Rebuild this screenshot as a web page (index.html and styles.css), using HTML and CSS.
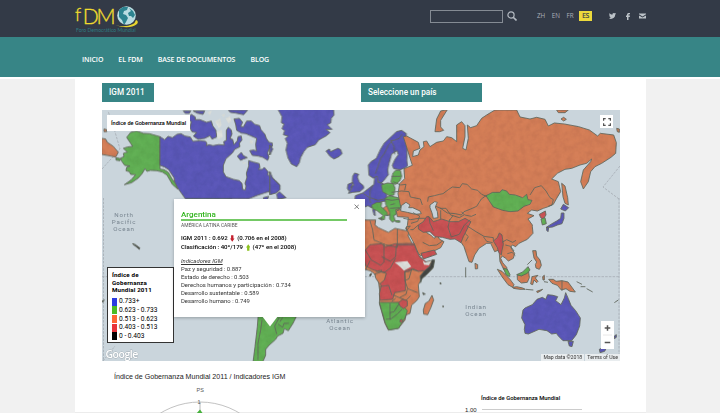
FILE: index.html
```html
<!DOCTYPE html>
<html lang="es">
<head>
<meta charset="utf-8">
<title>Foro Democrático Mundial</title>
<link rel="stylesheet" href="styles.css">
</head>
<body>
<header class="top">
  <div class="logo">
    <div class="brand"><span class="f">f</span><span>DM</span></div>
    <div class="tagline">Foro Democrático Mundial</div>
    <svg class="globe" viewBox="0 0 24 24">
      <circle cx="11.500" cy="10.500" r="9.300" fill="#b9dce2"/>
      <path d="M4 5l4-3 5 0-1 3-3 1-1 3 3 1 2 3-2 4-2 3-2-5-3-3zM14 3l4 3 2 4-2 3-2-2-2 0-1-3 3-2z" fill="#2d8390"/>
      <path d="M0 20q10 3 18-1q2-1 3-4q3 1 1 4q-8 6-22 1z" fill="#e8d52e"/>
    </svg>
  </div>
  <div class="search"></div>
  <svg class="lens" viewBox="0 0 10 10"><circle cx="4" cy="4" r="3.100" fill="none" stroke="#b4bac2" stroke-width="1.200"/><path d="M6.200 6.200L9.500 9.500" stroke="#b4bac2" stroke-width="1.600"/></svg>
  <div class="langs"><span>ZH</span><span>EN</span><span>FR</span><b>ES</b></div>
  <div class="social">
    <svg width="7" height="6" viewBox="0 0 14 12"><path fill="#bcc2c8" d="M14 1.500l-1.500 1.700C12.500 9 8 12 4 12 2.500 12 1 11.500 0 10.800c1.500 0 3-.4 4-1.200C2.500 9.400 1.700 8.600 1.300 7.500h1.200C1.200 7 .4 5.900.4 4.500l1.200.3C.4 3.700.2 2 .9.700 2.500 2.500 4.500 3.500 6.800 3.600 6.500 1.500 8 0 9.700 0c.8 0 1.500.3 2 .9L13.500.3z"/></svg>
    <svg width="4" height="7" viewBox="0 0 8 14"><path fill="#bcc2c8" d="M2 14V8H0V5h2V3.500C2 1 3.500 0 5.500 0H8v2.700H6.200C5.200 2.700 5 3 5 3.800V5h3l-.4 3H5v6z"/></svg>
    <svg width="7" height="6" viewBox="0 0 14 12"><path fill="#bcc2c8" d="M0 1h14v1.500L7 7 0 2.500zM0 5l7 4 7-4v6H0z"/></svg>
  </div>
</header>
<nav class="nav"><span>INICIO</span><span>EL FDM</span><span>BASE DE DOCUMENTOS</span><span>BLOG</span></nav>
<main class="page">
  <div class="titles"><div class="tag year">IGM 2011</div><div class="tag country">Seleccione un país</div></div>
  <section class="map">
    <svg class="world" viewBox="102 110 518 251">
      <defs>
        <filter id="relief" x="0" y="0" width="100%" height="100%">
          <feTurbulence type="fractalNoise" baseFrequency=".05" numOctaves="3" seed="4" result="n"/>
          <feColorMatrix in="n" type="matrix" values="0 0 0 0 0  0 0 0 0 0  0 0 0 0 0  .25 0 0 0 -.08" result="m"/>
          <feComposite in="m" in2="SourceAlpha" operator="in" result="s"/>
          <feMerge><feMergeNode in="SourceGraphic"/><feMergeNode in="s"/></feMerge>
        </filter>
      </defs>
      <g class="grid" fill="none"><path d="M102 276.700H620M103.500 198V361M619 198V361M102 169l18-20-7-24-5-14M620 166l-17 21 16 12M103 361l12-15"/></g>
      <g transform="translate(100 105) scale(.33333)" filter="url(#relief)">
        <path class="o" d="M5 100l12 2 5 10 18 12 15 18-8 14-20-4-22-4z M12 72l8 2 0 6-8 0z"/>
        <path class="g" d="M80 97l12-15 18-4 20 7 18 1 32 9v97l12 2 13 8 10 18 13 18 5 14-16-14-16-28-14-9-16-4-20-1-10 3-6-8-8 14-12 14-20 14-22 6 20-14 14-16-15-1-4-8-10-3 2-10 10-4-16-2-10-14-2-8 10-4-2-10 12-4-12-11 12-4 16-2z M48 158l14 3 -2 6-12-2z"/>
        <path class="g" d="M248 290l18-14h120l20 14z"/>
        <g transform="translate(150 0)">
          <path class="b" d="M30 95l14 9 10-10 13 4 14-10 12-2 12 7 16 3 8 13 22-2 16 2 4 6-2 7 8-3 12 3 16-3 18 1-2-10 8-4 0-30 6-9 9 8 2 12-6 14 8 2 4 16 10-12 2-12 10-2 2 12-8 10 2 10-16 8-6 10-20 18-8 20 0 20 8 14 22 8 18 4 8 8 2 18 8 2 2-12-3-8 6-18-2-12 7-22 0-16 14 4 18 5 2 12-5 5 12 0 6-6 12 14-2 8 22 16 14 14-1 11-20 8-16 3-30 10-25 10H106l-22-31-10-20-2-12-16-24-12-8-14-5z"/>
          <path class="b" d="M112 42l12-14 12 8 0 8 14 0 20 8 14-4 4 14 10 14 2 20-14 6-6-10-16 8-20 3-14-10 10-10-14-3-6-12 4-18z"/>
          <path class="b" d="M252 42l16-2 10 12-6 12 8 2 10-18 14 0 10 10 15 4 4 12 12 14 4 12 8 12 10 2 0 10-10 8-4 12 4 12-4 10-14-9-14-4-18-2-8-14 12-2 8 3-2-20 3-18-18-8-14-6-14-2-14-8-3-18z"/>
          <path class="b" d="M262 154l12-12 6 10 12 6-12 4-8 4z M100 18h22l-4 7-12 0z M130 18h34l-5 10-18-4z M235 15h58l-12 14-24-5-16-2z M340 278l16-4-4 10-10 2z"/>
          <path class="w" d="M172 22l14-6-6 14z M195 50l16-10 4 20-8 10z M226 40l14-6 4 14-8 8z M200 80l16-6 2 22-14 8z M214 30l12-4-4 10z M300 104l9 4-2 10-8-4z M276 170l16 4-12 2z"/>
        </g>
        <g transform="translate(510 0)">
          <path class="b" d="M22 10l168-2 2 22-8 10-2 14-10 5 14 14-18 0 12 10-12 10-22 12-10 14-24 8-10 12-10 18-4 16-8 12-16-8-10-18-6-24 4-20-6-14 8-8-14-4 4-12-8-6 6-14-8-4 2-18z"/>
          <path class="b" d="M168 138l10-6 4 8 8-4 14-6 8 4 4 12-8 8-16 8-12-8z M0 120l8 12-8 18z M0 200l8 20 22 22 0 12-12 10-18 5z M20 268l8-8 20 18-25 5z"/>
          <path class="o" d="M340 310l24-20 20-4 8 14-8 24-34 8z"/>
          <path class="b" d="M295 180l8-10 16-10 12-26 12-20 22-20 14-14 16-4 14 10-2 14 4 16 0 50 2 16-8 6-14 6-20-3-4-10 8-18 10-14-4-12-16 10-8 28-4 20 2 14-14 18-10 10-12-18-10 0-12-8z"/>
          <path class="line" d="M316 206l8-22 8-24 12-16 10-22 14-16M374 148l-2-24-10-18M362 106l10 0 16-6 8-12"/>
          <path class="b" d="M248 214l6-10 12 4-4 8 6 16 12 10 1 8-12 10-20 2-14 3 10-14-2-6 8-4-4-12z M232 250l2-12 14-6-3 18-8 9z"/>
          <path class="b" d="M256 272l22-8 16-12 10-8 8-6 2-22 8-2 2 18 16 4 4 18 6 16 0 18-18 2-10 12-18 6-10-6-12 5-30-2z M312 330l-4-16 6-4 2 22z"/>
          <path class="line" d="M278 264l20 14 4 16M310 240l-10 18 0 20 24 8 18-4"/>
          <path class="g" d="M334 240l18-6 18 2 5 14-3 20-14 2-20-12z M363 230l6-26 8-8 14 0 4 18-6 14-12 10-12-4z M345 280l14-8 16 4 18 4 6 18-8 12-14 4 2 14-8 4 4 14-8 6-8-10 0-20-6-14-6-10z"/>
          <path class="line" d="M364 214h28M345 282l20 4 26-4M360 300l14-4M360 310l30-2"/>
          <path class="g" d="M305 300l16-8 14 0-2 12 18 18 2 10-8-2-2 14-12-3 8-10-18-14-14-6z M375 347l14 0 0 5-12-1z M325 340l10-2 2 8z"/>
        </g>
        <g transform="translate(1020 0)">
          <path class="o" d="M-110 95l10-2 35 19 5 18-20 8-2 17 17-5 5-15 12-10-2-15 10-2 10 17 20-13 20-4 10-13 15 3 15 12 0-50 15-10 10 12 0 33-7 35 10 5 7-35-3-40 10 8 18-6 15-22 15-10 25-15h65l10 21 30 6 20-5 25 6 10 20 18-9 30 3 43 8 32 10 25 18 8-8 40 5 8 23-2 32-14 12-28 18-20 10-13 15-7 30-15 22-8-22 8-35 22-25 3-8-15 13-20 5-25 10-20 3-23 12-17 17 20 8 7 30-12 20-10 18-15 7-15 5-18 8-17-3-13 10 20 7-18 10 13 18 0 5 2 20-17 18-25 12-10 10-10-5-5 7 12 18-4 15-15 8-8-8-10-7-5 7 6 13 12 14 2 13-10-5-12-25-3-35-13 5-12-25h-12l-23 15-13 20-8 22-9-2-15-45-8-12-10-10-17-11-15 1-23-6-22-2-15-15-10-5 10 20 10 5 10 10 10-8 7 11 13 7-10 18-20 10-40 14-7-7-18-40-20-35 5-8 3-25-33-2-3-17 15-6-4-16-6-30 5-30 15-15-2-30 25-10z"/>
          <path class="o" d="M-15 80l5-38 12-24 20-4-10 16-10 16 0 20 9 10-12 4z M-100 376l-1-10 12-3z M350 15h35l-10 8-20 0z M363 42l8-5 8 6-8 5z M365 235l10 8 8 35 2 22-10-5-6-20z M530 70l8 2 0 10-6-2z"/>
          <path class="g" d="M138 272l20-10 22 0 6-8 14 4 8 10 18 2 22 8 12-10 4 16 12 2-6 12-18 6-18 14-24 2-22-4-28-10-12-18z"/>
          <path class="r" d="M298 328l18-10 2 12-8 12-8-4z"/><path class="g" d="M303 342l12-4 4 18-12 4z"/>
          <path class="b" d="M362 312l8-14 16 10-10 10z M320 366l16-10 14-8 12-8 2-16 8 0 0 16-6 16-14 4-14 6-18 2z M320 366l6 2-2 12-4-4z"/>
          <path class="r" d="M-65 360l15-10 10-15h7l13 15 25-8 25 8h25l20-10 18 10-8 15-15 30-7 18-18-11-15 1-23-6-22-2-15-15-20 2-15-10z M-57 445l40-10 7 13-40 14z"/>
          <path class="line" d="M-33 335l3 20 10 22M30 342l-6 24 10 30M34 396l24-8 14-26 18-18"/>
          <path class="r" d="M160 408l12-10 6-14 8 6 2 14 2 14-4 18-2 14-8-8-4-14z"/>
          <path class="sea" d="M-118 318l2-16 14-10 12 8-4 8 12 0 22 10 4 8-18 2-24-6z M-30 300l14-10 8 2-6 14 6 14 2 18-14 2-4-16-6-16z"/>
          <path class="line" d="M-37 290l2-14 18-4 16-4 10-2 16-12 12-8 22 2 8-12 14 2 14 14 18 4 12 12 14 6M138 272l-14 10-14 22-18 8-20 8-8 10-18-4-24-2-20-14-14-6M64 320l10 10 20 4 14-6M0 310l18 0 14 20 26 8 14-8M2 344l0-28M25 350l14-18M270 270l14-22 20-6 14 16 12 20 10 6-4 16-12 4M75 385l10 10-8 14M80 362l28 18 24 14 28 4 0 10M130 395l10 14 18 4M186 412l14-8 18 8 10-6M196 420l16 4 10 14M202 446l14-4 10 10M-140 230l22 10 16-2-4 18M-145 262l30-4 22 2 4 16 30 6 6 18M-110 340l22 4 24-4 20 0M-87 355l20-6 6-16-20-10M-65 360l-16 14-8 0M-52 412l20 10 22-2 18-12"/>
          <g transform="translate(0 375)">
            <path class="o" d="M105 100l8 4 0 12-7 1z M172 118l14 6 24 24 12 16-4 8-14-8-18-24z M218 172l12-2 18 4 8 4-16 0-20-3z M232 135l12 2 22-12 2 18-6 14-18 2-12-10z M278 62l10 0 2 16 10 12 4 16-6 12-10-4-2-10 4-8-8-12z M276 140l18-4-8 8 8 10-4 4-8-8-4 14-6-2z M326 148l14 0 8 6 18-2 18 4 22 30-16-2-12-8-14 4-12-14-16-6z M290 184l18-6-8 6-8 4z M308 140l5-4 0 14-4 0z"/>
            <path class="g" d="M190 114l12 4 8 16-2 6-10-6z M230 134l18-8 10-10 6-6 6 10-8 10-18 8z"/>
            <path class="b" d="M249 240l6-6 22-10 14-16 16-6 10 6 6-14 16 2 14 4-6 12 16 12 10-20 4-16 8 18 8 20 14 16 14 22-2 24-10 26-14 18-26 0-14-14-6-8-14 2-14-10-24-4-18 8-14 6-10-2-2-12 2-14-10-20z M384 334l16 0-4 16-8-2z M478 358l10-4 10 2-4 8-14 4z M523 318l6-4 0 8-6 4z"/>
            <path class="line" d="M366 152v30M410 155l16 8M422 170l14 0M440 176l18 10M262 104l14-14M258 178l22 2M77 112v30M312 155l12 2M523 218l12-8"/>
          </g>
        </g>
        <g transform="translate(510 375)">
          <path class="o" d="M275-20l10-10 32 0-2 15 10 8 30 14 20-12 38 8 4 10-4 2 32 60 13 13 4 9 30-7-4 25-33 30-10 20 3 35-8 12-15 13-5 25-12 5-3 15-20 25-30 5-10-20-17-60 2-30-5-40-13-20-12-8-40-10z"/>
          <path class="r" d="M270 50l16 10 14-16 34-3 12 9 30-9 56-1 8 22 10 20 10 6 14 14 14-2-20 22-22 2-18-8-10 8-14 2 2 30 0 26-32 6-6 20-38 3-2-20 6-24-8-14-4-18 14-14-14 2-14-4-20-10z"/>
          <path class="o" d="M315 132l18-6 16 4-6 20-14 12-12-18z"/>
          <path class="line" d="M286 60l18 30 28 16 10-10 0-56M335 80l26 14 16-14 2-38M300 -28l8 28 4 30 34 14 36 8 0-54M382 45h52M377 84l-16 30-16 12-28-2M405 122l20-4 20 6M405 122l0 30 8 24 30 12M425 118l-8 28-12 6M328 170l28-4 10 30M370 195l18 8 20-10 4-16M388 203l20 8 14-14M365 215l12-10M288 118l12-26"/>
          <path class="w" d="M374 97l18-2 20-2 12 17-22 12-12-12z"/>
          <path class="g" d="M328 217h62l22 25-6 20-20 33-30 5-10-20z"/><path class="line" d="M360 270v-50M390 217l-18 28-12 3M348 268l16-2 18-14 14-14"/>
          <path class="r" d="M386 218l12-10 14 4 0 16-12 8-10-8z M390 270l6-2 2 8-8 1z"/>
          <path class="w" d="M458 92l8 6 20-6-10 14-14-2z"/><path class="k" d="M450 138l14-16 16-14 6-18h8l-4 22-16 18-18 16-4 12z"/>
          <path class="o" d="M460 240l6-20 10-6 10-18 5 14-8 22-10 22-12-2z"/>
          <path class="k" d="M299 134l5-4 0 5-4 4z M458 188l8 4-6 2z M510 158l4 2-3 3z M518 228l4 1-3 3z"/>
        </g>
        <g transform="translate(0 375)">
          <path class="g" d="M475 250l-3 40-7 60-6 48h28l10-22 0-18 10-12 20-18 6-10 16-8 4-14 12 6 14-22 12-25z"/>
          <path class="line" d="M486 270l-4 30-8 40 0 50M534 282l14 10 4-12 14 0M530 312l-6-24 14-26M540 275l8-12"/>
          <path class="k" d="M98 42l8 2 14 10-2 4-12-10z M5 214l8-4-4 6z"/>
        </g>
      </g>
      <g class="ocean"><text x="124" y="217">North</text><text x="124" y="224">Pacific</text><text x="124" y="231">Ocean</text><text x="340" y="323">Atlantic</text><text x="340" y="329.500">Ocean</text><text x="476" y="309">Indian</text><text x="476" y="315.500">Ocean</text></g>
      <text class="google" x="105.500" y="358">Google</text>
    </svg>
    <div class="maplabel">Índice de Gobernanza Mundial</div>
    <div class="full"><svg viewBox="0 0 8 8"><path d="M.6 2.700V.6h2.100M5.300.6h2.100v2.100M7.400 5.300v2.100H5.300M2.700 7.400H.6V5.300" fill="none" stroke="#555" stroke-width="1.200"/></svg></div>
    <div class="zoom"><svg viewBox="0 0 13 28"><path d="M3.700 7h5.600M6.500 4.200v5.600M3.700 21.500h5.600" stroke="#555" stroke-width="1.500"/><path d="M2 14h9" stroke="#e2e2e2" stroke-width=".8"/></svg></div>
    <div class="credits"><span>Map data ©2018</span><span>Terms of Use</span></div>
    <div class="legend">
      <strong>Índice de<br>Gobernanza<br>Mundial 2011</strong>
      <ul><li><i class="c1"></i>0.733+</li><li><i class="c2"></i>0.623 - 0.733</li><li><i class="c3"></i>0.513 - 0.623</li><li><i class="c4"></i>0.403 - 0.513</li><li><i class="c5"></i>0 - 0.403</li></ul>
    </div>
    <article class="popup">
      <svg class="close" viewBox="0 0 6 6"><path d="M.6.6l4.800 4.800M5.400.6L.6 5.400" stroke="#666" stroke-width=".9"/></svg>
      <h2>Argentina</h2>
      <p class="region">AMÉRICA LATINA CARIBE</p>
      <p class="score">IGM 2011 : 0.692 <svg viewBox="0 0 5 7"><path d="M1.200 0h2.600v3.500H5L2.500 7 0 3.500h1.200z" fill="#c4202e"/></svg> (0.706 en el 2008)</p>
      <p class="score">Clasificación : 40º/179 <svg viewBox="0 0 5 7"><path d="M1.200 7h2.600V3.500H5L2.500 0 0 3.500h1.200z" fill="#8cc21f"/></svg> (47º en el 2008)</p>
      <p class="ind"><em>Indicadores IGM</em></p>
      <p>Paz y seguridad : 0.887</p><p>Estado de derecho : 0.503</p><p>Derechos humanos y participación : 0.734</p><p>Desarrollo sustentable : 0.589</p><p>Desarrollo humano : 0.749</p>
      <svg class="tip" viewBox="0 0 16 11"><path d="M0 0h16L8 10.500z" fill="#fff"/></svg>
    </article>
  </section>
  <section class="charts">
    <div class="radar"><h3>Índice de Gobernanza Mundial 2011 / Indicadores IGM</h3>
      <svg viewBox="0 0 120 28"><circle cx="60" cy="91" r="76" fill="none" stroke="#bbb" stroke-width=".9"/><path d="M60 15v13" stroke="#999" stroke-width=".7"/><path d="M55 28l5-5.500 4 5.500z" fill="#46b13b"/><path d="M58 28l2-2 2 2z" fill="#c33"/><text x="56.500" y="5">PS</text><text x="57.500" y="17">1</text></svg>
    </div>
    <div class="bar"><h4>Índice de Gobernanza Mundial</h4><div class="axis"><span>1.00</span><hr></div></div>
  </section>
</main>
</body>
</html>
```

FILE: styles.css
```css
* { box-sizing: border-box; }
body { margin: 0; width: 720px; height: 413px; overflow: hidden; background: #f1f1f1; font-family: Roboto, sans-serif; color: #222; }
h2, h3, h4, p, ul { margin: 0; padding: 0; }
svg { display: block; }
.top { height: 37px; background: #333a47; display: flex; align-items: flex-start; padding-left: 75px; }
.logo { position: relative; width: 355px; height: 37px; color: #f0dc2e; font-family: Lato, sans-serif; }
.brand { height: 26px; padding-top: 5px; display: flex; font-size: 21px; line-height: 21px; letter-spacing: -2px; font-weight: 300; -webkit-text-stroke: .35px #f0dc2e; }
.brand .f { font-size: 18px; line-height: 18px; letter-spacing: 1.500px; }
.tagline { color: #2f7d82; font-size: 5px; line-height: 6px; padding: 1px 0 0 1px; letter-spacing: .05px; }
.globe { position: absolute; left: 40px; top: 5px; width: 24px; height: 24px; }
.search { width: 73px; height: 13px; margin-top: 9.500px; border: 1px solid #858b94; }
.lens { width: 10px; height: 10px; margin: 11px 20px 0 4px; }
.langs { display: flex; gap: 6.500px; margin-top: 11px; font: 6.300px/10px "Open Sans", sans-serif; color: #a9afb8; }
.langs b { font-weight: 400; color: #333a47; background: #ecd93c; width: 13px; text-align: center; margin-left: -1px; -webkit-text-stroke: .2px; }
.social { display: flex; align-items: center; gap: 9.500px; margin: 12.500px 0 0 17px; height: 7px; }
.nav { height: 40px; background: #378586; display: flex; gap: 15px; align-items: center; padding: 5px 0 0 82px; color: #fff; font: 600 7px "Open Sans", sans-serif; letter-spacing: -.08px; }
.page { width: 571px; height: 336px; margin-left: 75px; background: #fff; padding: 6px 27px 0; border-bottom: 1px solid #ececec; }
.nav { border-bottom: 0; box-shadow: 0 2px 0 #fff; }
.titles { display: flex; gap: 207px; }
.tag { height: 19px; background: #378586; color: #fff; font: 500 8.200px/19px Roboto, sans-serif; padding-left: 7px; }
.year { width: 52px; }
.country { width: 121px; }
.map { position: relative; width: 518px; height: 251px; margin-top: 8px; background: #cad5dc; overflow: hidden; }
.world { width: 518px; height: 251px; }
.world path { stroke: #646a5f; stroke-width: 2.600; stroke-linejoin: round; }
.world .b { fill: #5c58b9; } .world .g { fill: #62b054; } .world .o { fill: #d57f58; } .world .r { fill: #c95255; }
.world .w { fill: #dde0dc; stroke: none; } .world .k { fill: #444745; } .world .sea { fill: #cad5dc; } .world .line { fill: none; }
.world .grid path { stroke: #a4abb2; stroke-width: .8; stroke-dasharray: 2.500 1.200; }
.ocean { font: 6.200px Roboto, sans-serif; letter-spacing: .8px; fill: #788590; text-anchor: middle; }
.google { font: 600 10.500px "Open Sans", sans-serif; letter-spacing: -.5px; fill: #fff; stroke: #a3adb4; stroke-width: .8px; paint-order: stroke; }
.maplabel { position: absolute; left: 5px; top: 5px; width: 83px; height: 16px; background: #fff; font: 500 5.550px/16px Roboto, sans-serif; padding-left: 4px; white-space: nowrap; color: #000; }
.full { position: absolute; left: 498px; top: 5px; width: 13px; height: 13px; padding: 2.500px; background: #fff; }
.zoom { position: absolute; left: 499px; top: 211px; width: 13px; height: 28px; background: #fff; }
.credits { position: absolute; right: 0; bottom: 0; height: 7px; display: flex; font: 5.200px/7px Roboto, sans-serif; color: #333; white-space: nowrap; gap: 1px; }
.credits span { background: #e9edef; padding: 0 2px; }
.legend { position: absolute; left: 5px; top: 157px; width: 67px; height: 76px; background: #fff; border: 1px solid #333; padding: 4px 4px; font-size: 6.700px; color: #000; }
.legend strong { display: block; font-weight: 700; line-height: 7.600px; letter-spacing: .15px; font-size: 6.200px; }
.legend ul { list-style: none; margin-top: 2.500px; }
.legend li { display: flex; gap: 2px; height: 8.700px; line-height: 8.700px; font-size: 6.650px; white-space: nowrap; }
.legend i { width: 5px; height: 8px; margin-top: .4px; }
.c1 { background: #2c3be0; } .c2 { background: #4dbb25; } .c3 { background: #ff6633; } .c4 { background: #e83338; } .c5 { background: #000; }
.popup { position: absolute; left: 72px; top: 89px; width: 191px; height: 118px; background: #fff; padding: 11px 18px 0 7px; font-size: 5.900px; line-height: 8px; color: #333; box-shadow: 0 1px 3px #0004; white-space: nowrap; }
.popup h2 { font: 500 8px/10px Roboto, sans-serif; color: #33b51f; border-bottom: 2px solid #74c965; height: 11px; }
.popup .region { font-size: 4.900px; line-height: 9px; margin-bottom: 3px; color: #555; }
.popup .score { font-size: 6.080px; font-weight: 500; line-height: 9px; color: #000; }
.popup .score svg { display: inline-block; width: 4.500px; height: 7px; vertical-align: -2px; margin: 0 1px; }
.popup .ind { margin-top: 6px; }
.ind em { text-decoration: underline; }
.close { position: absolute; right: 6px; top: 5px; width: 5.500px; height: 5.500px; }
.tip { position: absolute; left: 88px; top: 117px; width: 16px; height: 11px; }
.charts { display: flex; font-family: "Liberation Sans", sans-serif; }
.radar { width: 355px; padding: 12px 0 0 12px; }
.radar h3 { font: 400 7.080px/9px "Liberation Sans", sans-serif; white-space: nowrap; }
.radar svg { width: 120px; height: 28px; margin: 5px 0 0 26px; overflow: hidden; }
.radar text { font: 5.500px "Liberation Sans", sans-serif; fill: #555; }
.bar { padding-top: 32.500px; width: 160px; }
.bar h4 { font: 500 5.850px/8px Roboto, sans-serif; color: #000; padding-left: 24px; white-space: nowrap; }
.axis { display: flex; align-items: center; gap: 5px; font-size: 6px; line-height: 8px; margin-top: 4px; padding-left: 8px; }
.axis hr { width: 100px; height: 1px; border: 0; background: #ccc; margin: 0; }
```
